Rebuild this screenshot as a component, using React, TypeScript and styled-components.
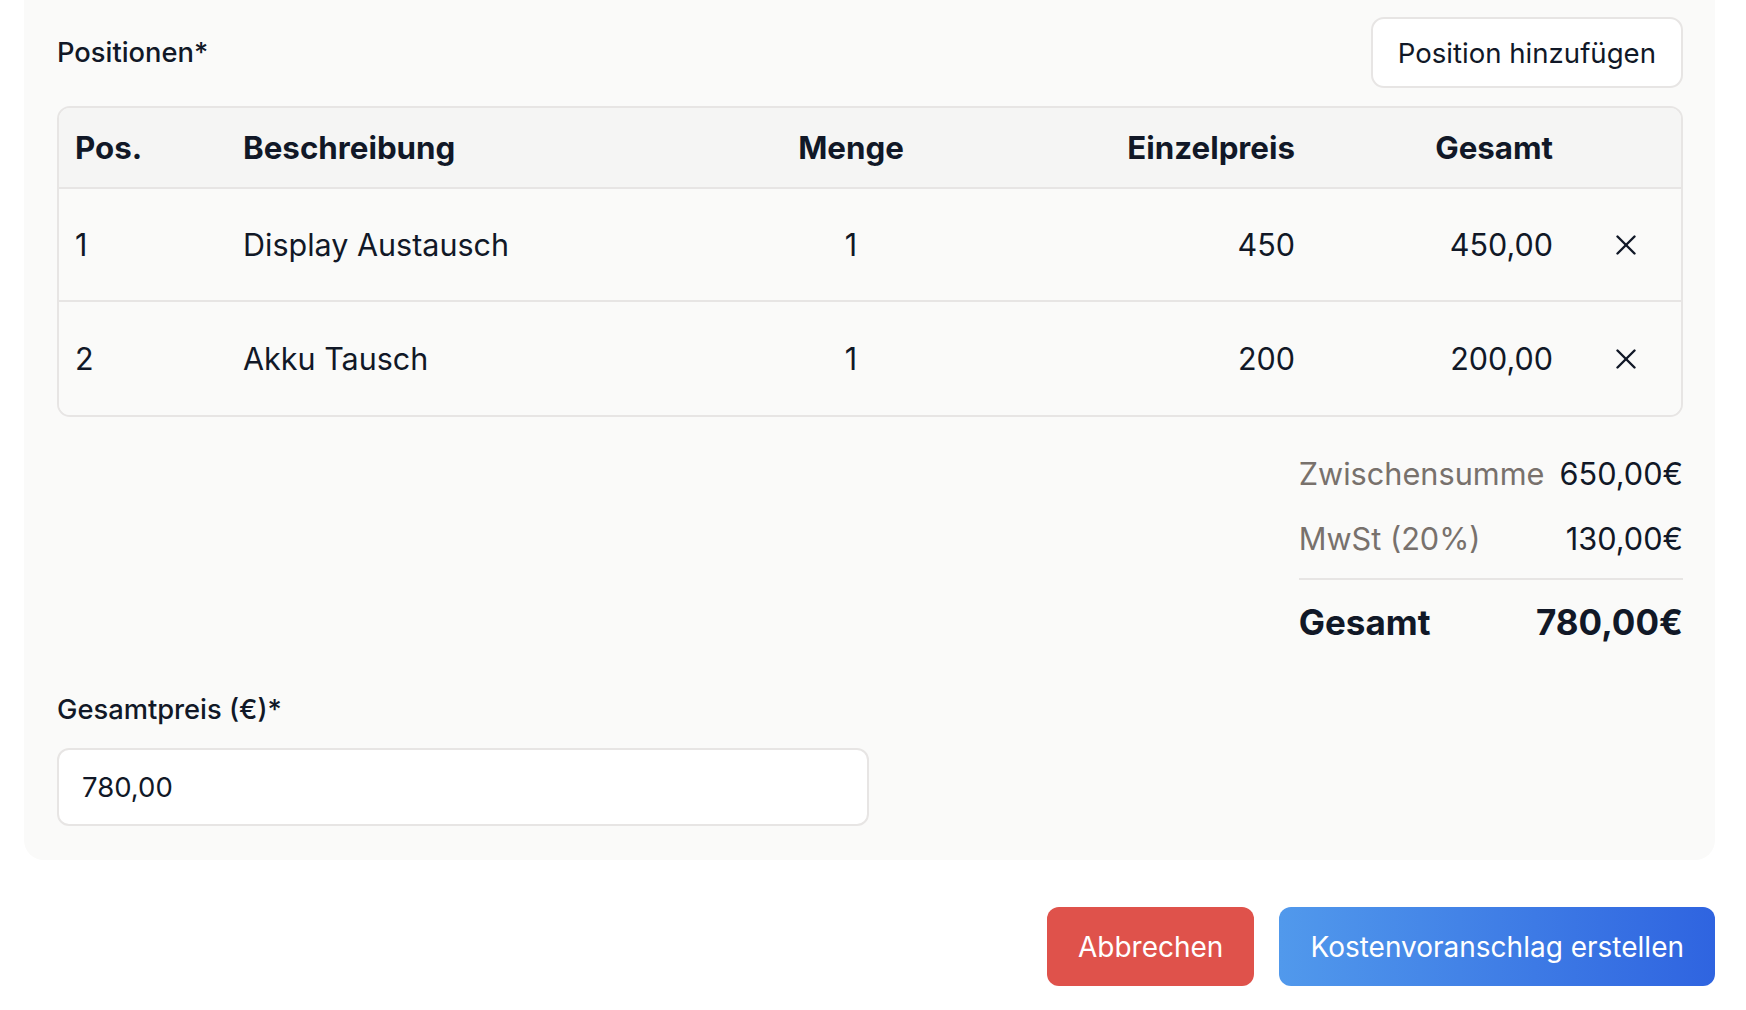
import React from "react";
import styled, { createGlobalStyle } from "styled-components";

const Global = createGlobalStyle`
  html, body { margin: 0; padding: 0; background: #ffffff; }
  body { font-family: Inter, "Noto Sans", "Liberation Sans", sans-serif; color: #111827; }
  * { box-sizing: border-box; }
`;

const Page = styled.div`
  padding: 0 31px 0 24px;
`;

const Card = styled.section`
  background: #fafaf9;
  border-radius: 0 0 20px 20px;
  padding: 17px 32px 34px 33px;
`;

const SectionHeader = styled.div`
  display: flex;
  align-items: center;
  justify-content: space-between;
`;

const FieldLabel = styled.label`
  font-size: 27.3px;
  line-height: 39px;
  font-weight: 500;
  color: #111827;
`;

const OutlineButton = styled.button`
  height: 71px;
  padding: 0 25px;
  background: #ffffff;
  border: 2px solid #e7e5e4;
  border-radius: 13px;
  font-family: inherit;
  font-size: 27.6px;
  font-weight: 400;
  color: #111827;
`;

const Table = styled.div`
  margin-top: 18px;
  border: 2px solid #e7e5e4;
  border-radius: 13px;
  overflow: hidden;
`;

const Row = styled.div<{ $head?: boolean; $last?: boolean }>`
  display: grid;
  grid-template-columns: 168px 484px 280px 320px 258px 1fr;
  align-items: center;
  height: ${(p) => (p.$head ? "81px" : "113px")};
  background: ${(p) => (p.$head ? "#f5f5f4" : "#fafaf9")};
  border-bottom: ${(p) => (p.$last ? "none" : "2px solid #e7e5e4")};
`;

const Cell = styled.div<{ $align?: "left" | "center" | "right"; $head?: boolean }>`
  padding: 0 16px;
  text-align: ${(p) => p.$align || "left"};
  font-size: ${(p) => (p.$head ? "31.3px" : "30.5px")};
  font-weight: ${(p) => (p.$head ? 700 : 400)};
  color: #111827;
  white-space: nowrap;
`;

const RemoveButton = styled.button`
  justify-self: center;
  display: flex;
  align-items: center;
  justify-content: center;
  width: 40px;
  height: 40px;
  padding: 0;
  border: none;
  background: transparent;
  color: #111827;
  margin-left: 2px;
`;

const Totals = styled.div`
  margin-top: 35px;
  margin-left: auto;
  width: fit-content;
  display: flex;
  flex-direction: column;
  gap: 21px;
`;

const TotalRow = styled.div`
  display: flex;
  justify-content: space-between;
  align-items: center;
  gap: 15px;
`;

const TotalLabel = styled.div<{ $grand?: boolean }>`
  font-size: ${(p) => (p.$grand ? "35px" : "30.7px")};
  line-height: ${(p) => (p.$grand ? "48px" : "44px")};
  font-weight: ${(p) => (p.$grand ? 700 : 400)};
  color: ${(p) => (p.$grand ? "#111827" : "#78716c")};
`;

const TotalValue = styled.div<{ $grand?: boolean }>`
  font-size: ${(p) => (p.$grand ? "35px" : "30.7px")};
  line-height: ${(p) => (p.$grand ? "48px" : "44px")};
  font-weight: ${(p) => (p.$grand ? 700 : 400)};
  color: #111827;
  text-align: right;
`;

const Divider = styled.div`
  height: 2px;
  background: #e7e5e4;
  margin: -4px 0 -3px;
`;

const Field = styled.div`
  margin-top: 44px;
  display: flex;
  flex-direction: column;
  gap: 19px;
`;

const Input = styled.input`
  width: 812px;
  height: 78px;
  padding: 0 23px;
  background: #ffffff;
  border: 2px solid #e7e5e4;
  border-radius: 12px;
  font-family: inherit;
  font-size: 27.5px;
  color: #111827;
  outline: none;
`;

const Actions = styled.div`
  margin-top: 47px;
  display: flex;
  justify-content: flex-end;
  gap: 25px;
`;

const ActionButton = styled.button<{ $variant: "danger" | "primary" }>`
  height: 79px;
  padding: 0 31px;
  border: none;
  border-radius: 12px;
  font-family: inherit;
  font-size: 28px;
  font-weight: 400;
  color: #ffffff;
  background: ${(p) =>
    p.$variant === "danger"
      ? "#df524b"
      : "linear-gradient(90deg, #5199ec 0%, #2f64e0 100%)"};
`;

const XIcon = () => (
  <svg width="20" height="20" viewBox="0 0 20 20" fill="none" stroke="currentColor" strokeWidth="2.4" strokeLinecap="round">
    <path d="M1.5 1.5 L18.5 18.5" />
    <path d="M18.5 1.5 L1.5 18.5" />
  </svg>
);

const items = [
  { pos: 1, desc: "Display Austausch", qty: 1, price: "450", total: "450,00" },
  { pos: 2, desc: "Akku Tausch", qty: 1, price: "200", total: "200,00" },
];

export default function App() {
  return (
    <>
      <Global />
      <Page>
        <Card>
          <SectionHeader>
            <FieldLabel>Positionen*</FieldLabel>
            <OutlineButton type="button">Position hinzufügen</OutlineButton>
          </SectionHeader>
          <Table>
            <Row $head>
              <Cell $head>Pos.</Cell>
              <Cell $head>Beschreibung</Cell>
              <Cell $head $align="center">Menge</Cell>
              <Cell $head $align="right">Einzelpreis</Cell>
              <Cell $head $align="right">Gesamt</Cell>
              <Cell $head />
            </Row>
            {items.map((it, i) => (
              <Row key={it.pos} $last={i === items.length - 1}>
                <Cell>{it.pos}</Cell>
                <Cell>{it.desc}</Cell>
                <Cell $align="center">{it.qty}</Cell>
                <Cell $align="right">{it.price}</Cell>
                <Cell $align="right">{it.total}</Cell>
                <RemoveButton type="button" aria-label="Entfernen">
                  <XIcon />
                </RemoveButton>
              </Row>
            ))}
          </Table>
          <Totals>
            <TotalRow>
              <TotalLabel>Zwischensumme</TotalLabel>
              <TotalValue>650,00€</TotalValue>
            </TotalRow>
            <TotalRow>
              <TotalLabel>MwSt (20%)</TotalLabel>
              <TotalValue>130,00€</TotalValue>
            </TotalRow>
            <Divider />
            <TotalRow>
              <TotalLabel $grand>Gesamt</TotalLabel>
              <TotalValue $grand>780,00€</TotalValue>
            </TotalRow>
          </Totals>
          <Field>
            <FieldLabel>Gesamtpreis (€)*</FieldLabel>
            <Input value="780,00" readOnly />
          </Field>
        </Card>
        <Actions>
          <ActionButton type="button" $variant="danger">Abbrechen</ActionButton>
          <ActionButton type="button" $variant="primary">Kostenvoranschlag erstellen</ActionButton>
        </Actions>
      </Page>
    </>
  );
}
